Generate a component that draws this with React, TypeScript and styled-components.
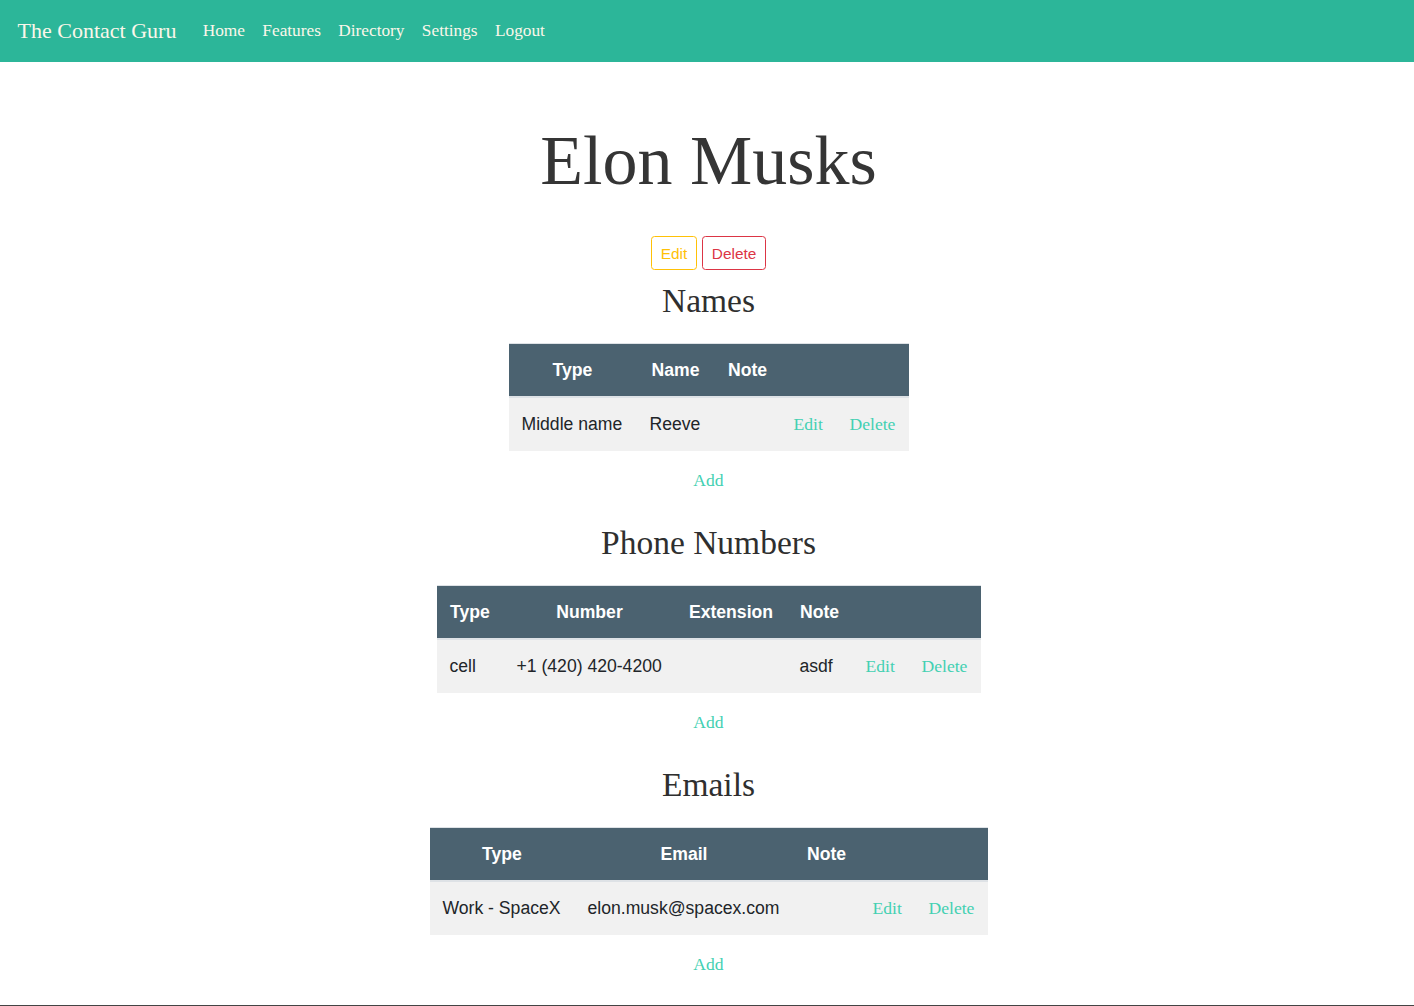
import React from "react";
import styled, { createGlobalStyle } from "styled-components";

const GlobalStyle = createGlobalStyle`
  html, body { margin: 0; padding: 0; background: #ffffff; }
  body {
    font-family: "Liberation Serif", "Times New Roman", serif;
    font-size: 17.6px;
    color: #212529;
  }
  * { box-sizing: border-box; }
`;

const Navbar = styled.nav`
  height: 62px;
  background: #2cb699;
  display: flex;
  align-items: center;
  padding: 0 17.6px;
`;

const Brand = styled.a`
  font-family: "Liberation Serif", serif;
  font-size: 22px;
  color: #fbf6ea;
  text-decoration: none;
  margin-right: 17.6px;
`;

const NavList = styled.div`
  display: flex;
  align-items: center;
`;

const NavLink = styled.a`
  font-family: "Liberation Serif", serif;
  font-size: 17.3px;
  color: #fbf6ea;
  text-decoration: none;
  padding: 8px 8.7px;
`;

const Main = styled.main`
  display: flex;
  flex-direction: column;
  align-items: center;
  padding: 0 0 28px 3px;
`;

const Title = styled.h1`
  font-family: "Liberation Serif", serif;
  font-weight: 400;
  font-size: 70px;
  line-height: 84px;
  color: #353535;
  margin: 57px 0 33px;
`;

const ButtonRow = styled.div`
  display: flex;
  gap: 5px;
  margin-bottom: 11px;
`;

const OutlineButton = styled.button<{ $tone: string }>`
  font-family: "Liberation Sans", Arial, sans-serif;
  font-size: 15.4px;
  line-height: 23px;
  padding: 4.5px 8.8px;
  border-radius: 3.5px;
  background: #ffffff;
  border: 1px solid ${(p) => p.$tone};
  color: ${(p) => p.$tone};
  cursor: pointer;
`;

const Section = styled.section`
  display: flex;
  flex-direction: column;
  align-items: center;
  margin-bottom: 30px;
  &:last-child { margin-bottom: 0; }
`;

const SectionTitle = styled.h2`
  font-family: "Liberation Serif", serif;
  font-weight: 400;
  font-size: 33.5px;
  line-height: 40px;
  color: #2f2f2f;
  margin: 0 0 22px;
`;

const Table = styled.table<{ $width: number }>`
  width: ${(p) => p.$width}px;
  table-layout: fixed;
  border-collapse: separate;
  border-spacing: 0;
  font-family: "Liberation Sans", Arial, sans-serif;
  font-size: 17.6px;
`;

const HeadCell = styled.th`
  background: #4b6270;
  color: #ffffff;
  font-weight: 700;
  text-align: center;
  padding: 13px 0;
  line-height: 26px;
  border-top: 1px solid #dee2e6;
  border-bottom: 2px solid #dee2e6;
  white-space: nowrap;
`;

const Cell = styled.td`
  background: #f1f1f1;
  color: #212529;
  text-align: left;
  padding: 13px 13px;
  line-height: 27px;
  white-space: nowrap;
`;

const RowLink = styled.a`
  font-family: "Liberation Serif", serif;
  font-size: 17.6px;
  color: #43d0b2;
  text-decoration: none;
  cursor: pointer;
`;

const AddLink = styled.a`
  font-family: "Liberation Serif", serif;
  font-size: 17.6px;
  line-height: 26px;
  color: #43d0b2;
  text-decoration: none;
  margin-top: 16px;
  cursor: pointer;
`;

const Footer = styled.footer`
  border-top: 1px solid #444444;
`;

type Column = { label: string; width: number };

type TableSpec = {
  title: string;
  columns: Column[];
  rows: string[][];
};

const linkCols: Column[] = [
  { label: "", width: 56 },
  { label: "", width: 72 },
];

const tables: TableSpec[] = [
  {
    title: "Names",
    columns: [
      { label: "Type", width: 128 },
      { label: "Name", width: 78 },
      { label: "Note", width: 66 },
      ...linkCols,
    ],
    rows: [["Middle name", "Reeve", ""]],
  },
  {
    title: "Phone Numbers",
    columns: [
      { label: "Type", width: 67 },
      { label: "Number", width: 172 },
      { label: "Extension", width: 111 },
      { label: "Note", width: 66 },
      ...linkCols,
    ],
    rows: [["cell", "+1 (420) 420-4200", "", "asdf"]],
  },
  {
    title: "Emails",
    columns: [
      { label: "Type", width: 145 },
      { label: "Email", width: 219 },
      { label: "Note", width: 66 },
      ...linkCols,
    ],
    rows: [["Work - SpaceX", "elon.musk@spacex.com", ""]],
  },
];

function DataSection({ spec }: { spec: TableSpec }) {
  const total = spec.columns.reduce((s, c) => s + c.width, 0);
  return (
    <Section>
      <SectionTitle>{spec.title}</SectionTitle>
      <Table $width={total}>
        <colgroup>
          {spec.columns.map((c, i) => (
            <col key={i} style={{ width: c.width }} />
          ))}
        </colgroup>
        <thead>
          <tr>
            {spec.columns.map((c, i) => (
              <HeadCell key={i}>{c.label}</HeadCell>
            ))}
          </tr>
        </thead>
        <tbody>
          {spec.rows.map((r, ri) => (
            <tr key={ri}>
              {r.map((v, i) => (
                <Cell key={i}>{v}</Cell>
              ))}
              <Cell>
                <RowLink>Edit</RowLink>
              </Cell>
              <Cell>
                <RowLink>Delete</RowLink>
              </Cell>
            </tr>
          ))}
        </tbody>
      </Table>
      <AddLink>Add</AddLink>
    </Section>
  );
}

export default function App() {
  return (
    <>
      <GlobalStyle />
      <Navbar>
        <Brand>The Contact Guru</Brand>
        <NavList>
          <NavLink>Home</NavLink>
          <NavLink>Features</NavLink>
          <NavLink>Directory</NavLink>
          <NavLink>Settings</NavLink>
          <NavLink>Logout</NavLink>
        </NavList>
      </Navbar>
      <Main>
        <Title>Elon Musks</Title>
        <ButtonRow>
          <OutlineButton $tone="#ffc107">Edit</OutlineButton>
          <OutlineButton $tone="#dc3545">Delete</OutlineButton>
        </ButtonRow>
        {tables.map((t) => (
          <DataSection key={t.title} spec={t} />
        ))}
      </Main>
      <Footer />
    </>
  );
}
